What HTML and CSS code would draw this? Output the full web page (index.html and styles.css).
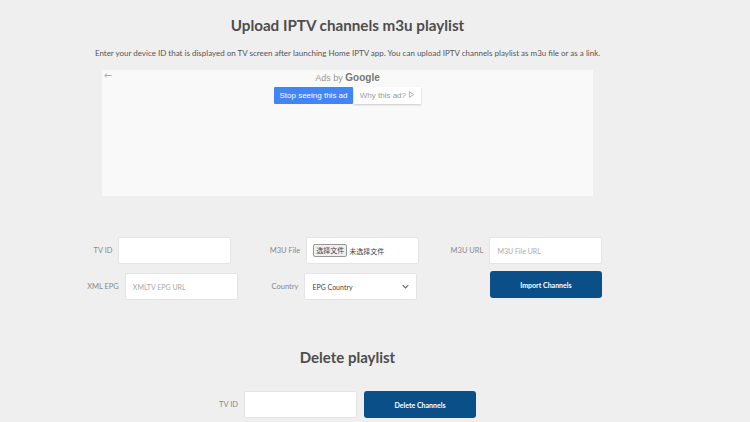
FILE: index.html
```html
<!DOCTYPE html>
<html>
<head>
    <title>Home IPTV - Upload playlist</title>
    <link rel="stylesheet" href="styles.css">
</head>
<body>
    <div class="page">
        <h1 class="title">Upload IPTV channels m3u playlist</h1>
        <p class="intro">Enter your device ID that is displayed on TV screen after launching Home IPTV app. You can upload IPTV channels playlist as m3u file or as a link.</p>

        <!-- Google ad placeholder -->
        <div class="ad-box">
            <span class="ad-back">&#8592;</span>
            <div class="ad-label">Ads by <b>Google</b></div>
            <div class="ad-actions">
                <span class="ad-stop">Stop seeing this ad</span>
                <span class="ad-why">Why this ad?
                    <svg width="7" height="7" viewBox="0 0 10 10"><path d="M2 1v8M2 1l6 4-6 4" fill="none" stroke="#aaa" stroke-width="1.3"/></svg>
                </span>
            </div>
        </div>

        <form class="upload-form">
            <div class="field">
                <label>TV ID</label>
                <div class="input"></div>
            </div>
            <div class="field">
                <label>M3U File</label>
                <div class="input file-input">
                    <span class="file-btn">选择文件</span>
                    <span class="file-name">未选择文件</span>
                </div>
            </div>
            <div class="field">
                <label>M3U URL</label>
                <div class="input placeholder">M3U File URL</div>
            </div>
            <div class="field">
                <label>XML EPG</label>
                <div class="input placeholder">XMLTV EPG URL</div>
            </div>
            <div class="field">
                <label>Country</label>
                <div class="input select">
                    <span>EPG Country</span>
                    <svg width="7" height="5" viewBox="0 0 10 6"><path d="M1 1l4 4 4-4" fill="none" stroke="#666" stroke-width="1.6"/></svg>
                </div>
            </div>
            <div class="field">
                <label class="hidden">M3U URL</label>
                <button type="button" class="btn import-btn">Import Channels</button>
            </div>
        </form>

        <h2 class="subtitle">Delete playlist</h2>
        <div class="delete-row">
            <label>TV ID</label>
            <div class="input"></div>
            <button type="button" class="btn">Delete Channels</button>
        </div>
    </div>
</body>
</html>
```

FILE: styles.css
```css
body {
    margin: 0;
    background-color: #efefef;
    font-family: Lato, "Open Sans", Arial, sans-serif;
    color: #555;
    overflow: hidden;
}

.page {
    width: 695px;
    display: flex;
    flex-direction: column;
    align-items: center;
}

.title {
    margin: 14px 0 0;
    font-size: 15.2px;
    font-weight: 700;
    color: #4d4d4d;
    line-height: 22px;
}

.intro {
    margin: 12px 0 0;
    font-size: 8px;
    line-height: 10px;
    color: #555;
}

/* Ad block */
.ad-box {
    position: relative;
    width: 491px;
    height: 126px;
    margin-top: 12px;
    background-color: #f9f9f9;
    display: flex;
    flex-direction: column;
    align-items: center;
}

.ad-back {
    position: absolute;
    left: 2px;
    top: 0;
    font-size: 8px;
    color: #999;
}

.ad-label {
    margin-top: 2px;
    font-family: Arial, "Liberation Sans", sans-serif;
    font-size: 9px;
    color: #999;
}

.ad-label b {
    font-size: 10px;
    color: #777;
}

.ad-actions {
    display: flex;
    margin-top: 4px;
    font-family: Arial, "Liberation Sans", sans-serif;
    font-size: 8px;
}

.ad-stop {
    width: 79px;
    height: 17px;
    line-height: 17px;
    text-align: center;
    background-color: #4285f4;
    color: white;
    border-radius: 1px;
}

.ad-why {
    width: 67px;
    height: 17px;
    line-height: 17px;
    text-align: center;
    background-color: white;
    color: #999;
    margin-left: 1px;
    box-shadow: 0 1px 2px rgba(0, 0, 0, 0.2);
}

/* Upload form */
.upload-form {
    display: grid;
    grid-template-columns: repeat(3, 182px);
    row-gap: 9px;
    margin-top: 41px;
    margin-left: -6px;
}

.field {
    display: flex;
    align-items: center;
    justify-content: center;
    gap: 6px;
}

label {
    font-size: 7.5px;
    color: #888;
}

label.hidden {
    visibility: hidden;
}

.input {
    box-sizing: border-box;
    width: 113px;
    height: 27px;
    background-color: white;
    border: 1px solid #e4e4e4;
    border-radius: 2px;
    display: flex;
    align-items: center;
    padding: 0 7px;
    font-size: 7px;
}

.placeholder {
    color: #aaa;
}

.file-input {
    padding: 0 6px;
    font-family: "Noto Sans CJK SC", sans-serif;
    font-size: 7px;
    color: #444;
}

.file-btn {
    border: 1px solid #999;
    background-color: #efefef;
    border-radius: 2px;
    padding: 0 2px;
    line-height: 11px;
    margin-right: 2px;
}

.select {
    justify-content: space-between;
    color: #444;
}

.btn {
    width: 112px;
    height: 27px;
    border: none;
    border-radius: 3px;
    background-color: #0b4f89;
    color: white;
    font-family: Lato, Arial, sans-serif;
    font-size: 7px;
    font-weight: 700;
    cursor: pointer;
}

.import-btn {
    margin-top: -4px;
}

.subtitle {
    margin: 47px 0 0;
    font-size: 15px;
    font-weight: 700;
    color: #4d4d4d;
    line-height: 20px;
}

.delete-row {
    display: flex;
    align-items: center;
    gap: 6px;
    margin-top: 24px;
}

.delete-row .btn {
    margin-left: 1px;
}
```
